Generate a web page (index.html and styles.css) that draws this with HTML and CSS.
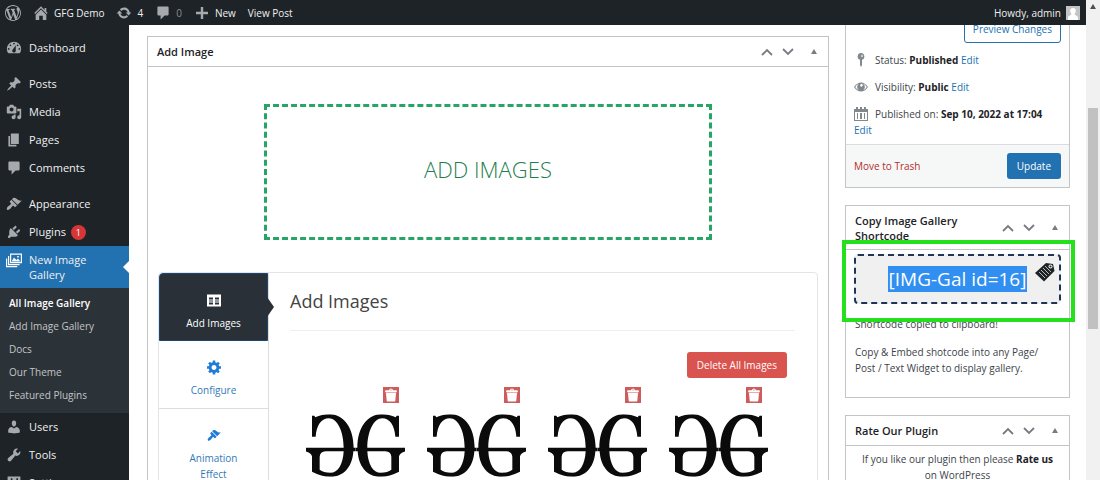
FILE: index.html
```html
<!DOCTYPE html>
<html lang="en">
<head>
<meta charset="utf-8">
<title>Edit Gallery</title>
<link rel="stylesheet" href="styles.css">
</head>
<body>
<svg class="defs" aria-hidden="true">
  <symbol id="comment" viewBox="0 0 20 20"><path d="M4 2h12c.6 0 1 .4 1 1v9c0 .6-.4 1-1 1h-4l-5 5v-5H4c-.6 0-1-.4-1-1V3c0-.6.4-1 1-1z"/></symbol>
  <symbol id="brush" viewBox="0 0 20 20"><path d="M14.48 11.06L7.41 3.99l1.5-1.5c.5-.56 2.3-.47 3.51.32 1.21.8 1.43 1.28 2.91 2.1 1.18.64 2.45 1.26 4.45.85zm-.71.71L6.7 4.7 4.93 6.47c-.39.39-.39 1.02 0 1.41l1.06 1.06c.39.39.39 1.03 0 1.42-.6.6-1.43 1.11-2.21 1.69-.35.26-.7.53-1.01.84C1.43 14.23.4 16.08 1.4 17.07c.99 1 2.84-.03 4.18-1.36.31-.31.58-.66.85-1.02.57-.78 1.08-1.61 1.69-2.21.39-.39 1.02-.39 1.41 0l1.06 1.06c.39.39 1.02.39 1.41 0z"/></symbol>
  <symbol id="trash" viewBox="1 1 18 18"><path d="M12.5 4h4c.6 0 1 .4 1 1v1.5h-15V5c0-.6.4-1 1-1h4c.2-1.300 1.300-2.200 2.500-2.200s2.300.9 2.500 2.200zM8.500 4h3c-.2-.6-.9-1-1.500-1s-1.300.4-1.500 1zM3.500 7h13l-1 10.500c0 .6-.5 1-1 1H5.500c-.5 0-1-.4-1-1z"/></symbol>
  <symbol id="up" viewBox="0 0 12 8"><path d="M1 7l5-5 5 5" fill="none" stroke="currentColor" stroke-width="1.800"/></symbol>
  <symbol id="down" viewBox="0 0 12 8"><path d="M1 1l5 5 5-5" fill="none" stroke="currentColor" stroke-width="1.800"/></symbol>
  <symbol id="toggle" viewBox="0 0 6 5"><path d="M0 5l3-5 3 5z"/></symbol>
  <symbol id="half" viewBox="148 0 149 188"><path fill-rule="evenodd" d="M279 5V68H268C266 32 250 12 229 12C203 12 184 52 184 101H297V112Q283 116 279 126V173Q250 188 225 188C180 188 157 152 155 111H148V101H154C154 36 187 0 226 0Q250 0 269 9L272 5ZM184 111C186 150 201 176 224 176Q245 176 256 167V128Q255 112 238 111Z"/></symbol>
  <symbol id="logo" viewBox="0 0 297 188"><use href="#half" x="148" width="149" height="188"/><use href="#half" x="148" width="149" height="188" transform="matrix(-1 0 0 1 297 0)"/></symbol>
</svg>
<div class="window">
  <header class="adminbar">
    <a href="#" aria-label="About WordPress"><svg class="icon" viewBox="0 0 20 20"><path d="M20 10c0-5.510-4.490-10-10-10C4.480 0 0 4.490 0 10c0 5.520 4.480 10 10 10 5.510 0 10-4.480 10-10zM7.780 15.370L4.370 6.220c.55-.02 1.170-.08 1.170-.08.5-.06.44-1.130-.06-1.110 0 0-1.450.11-2.370.11-.18 0-.37 0-.58-.01C4.120 2.690 6.870 1.110 10 1.110c2.330 0 4.450.87 6.050 2.340-.68-.11-1.650.39-1.650 1.580 0 .74.45 1.360.9 2.100.35.610.55 1.360.55 2.460 0 1.490-1.400 5-1.400 5l-3.030-8.370c.54-.02.82-.17.82-.17.5-.05.44-1.250-.06-1.220 0 0-1.440.12-2.380.12-.87 0-2.330-.12-2.330-.12-.5-.03-.56 1.200-.06 1.220l.92.08 1.260 3.410zM17.410 10c.24-.64.74-1.870.43-4.250.7 1.290 1.050 2.710 1.050 4.250 0 3.290-1.730 6.240-4.400 7.780.97-2.590 1.940-5.200 2.920-7.780zM6.100 18.090C3.120 16.650 1.110 13.530 1.110 10c0-1.300.23-2.480.72-3.590C3.250 10.300 4.670 14.200 6.100 18.090zm4.030-6.630l2.580 6.980c-.86.29-1.760.45-2.710.45-.79 0-1.570-.11-2.290-.33.81-2.380 1.620-4.740 2.420-7.100z"/></svg></a>
    <a href="#"><svg class="icon" viewBox="1 1 18 18"><path d="M16 8.500l1.530 1.530-1.060 1.060L10 4.600l-6.470 6.490-1.060-1.060L10 2.500l4 4v-2h2v4zm-6-2.460l6 5.990V18h-4v-5H8v5H4v-5.970z"/></svg>GFG Demo</a>
    <a href="#"><svg class="icon" viewBox="0 0 20 20"><path d="M10.200 3.280c3.530 0 6.430 2.610 6.920 6h2.080l-3.500 4-3.500-4h2.320c-.45-1.970-2.210-3.450-4.320-3.450-1.450 0-2.730.71-3.540 1.780L4.950 5.660C6.230 4.200 8.110 3.280 10.200 3.280zm-.4 13.440c-3.520 0-6.430-2.610-6.920-6H.8l3.500-4 3.500 4H5.480c.45 1.970 2.210 3.450 4.320 3.450 1.450 0 2.730-.71 3.540-1.780l1.710 1.950c-1.280 1.460-3.150 2.380-5.250 2.380z"/></svg>4</a>
    <a href="#" class="dim"><svg class="icon"><use href="#comment"/></svg>0</a>
    <a href="#"><svg class="icon" viewBox="0 0 20 20"><path d="M17.500 8.500v3h-6v6h-3v-6h-6v-3h6v-6h3v6z"/></svg>New</a>
    <a href="#">View Post</a>
    <a href="#" class="account">Howdy, admin<svg class="avatar" viewBox="0 0 14 14"><path fill="#c3c4c7" d="M0 0h14v14H0z"/><path fill="#fff" d="M7 2c4 0 3 5 1.500 6C9 9.500 12 9.500 12 12v2H2v-2c0-2.500 3-2.500 3.500-4C4 7 3 2 7 2z"/></svg></a>
  </header>
  <div class="workspace">
    <nav class="sidebar">
      <a href="#"><svg class="icon" viewBox="1 1 18 18"><path fill-rule="evenodd" d="M3.760 16h12.480c1.100-1.370 1.760-3.110 1.760-5 0-4.420-3.580-8-8-8s-8 3.580-8 8c0 1.890.66 3.630 1.760 5zM10 4c.55 0 1 .45 1 1s-.45 1-1 1-1-.45-1-1 .45-1 1-1zM6 6c.55 0 1 .45 1 1s-.45 1-1 1-1-.45-1-1 .45-1 1-1zm8 0c.55 0 1 .45 1 1s-.45 1-1 1-1-.45-1-1 .45-1 1-1zm-5.370 5.550L12 7v6c0 1.100-.9 2-2 2s-2-.9-2-2c0-.57.24-1.080.63-1.450zM4 10c.55 0 1 .45 1 1s-.45 1-1 1-1-.45-1-1 .45-1 1-1zm12 0c.55 0 1 .45 1 1s-.45 1-1 1-1-.45-1-1 .45-1 1-1z"/></svg>Dashboard</a>
      <a href="#" class="spaced"><svg class="icon" viewBox="0 0 20 20"><path d="M10.440 3.020l1.820-1.820 6.360 6.350-1.830 1.820c-1.050-.68-2.480-.57-3.410.36l-.75.75c-.92.93-1.040 2.350-.35 3.410l-1.830 1.820-2.410-2.410-2.800 2.790c-.42.42-3.380 2.710-3.800 2.290s1.860-3.390 2.280-3.810l2.790-2.790L4.100 9.360l1.830-1.820c1.050.69 2.480.57 3.400-.36l.75-.75c.93-.92 1.050-2.350.36-3.410z"/></svg>Posts</a>
      <a href="#"><svg class="icon" viewBox="0 0 20 20"><path fill-rule="evenodd" d="M13 11V4c0-.55-.45-1-1-1h-1.670L9 1H5L3.670 3H2c-.55 0-1 .45-1 1v7c0 .55.45 1 1 1h10c.55 0 1-.45 1-1zM7 4.500c1.380 0 2.500 1.120 2.500 2.500S8.380 9.500 7 9.500 4.500 8.380 4.500 7 5.620 4.500 7 4.500zM14 6h5v10.500c0 1.380-1.120 2.500-2.500 2.500S14 17.880 14 16.500s1.120-2.500 2.500-2.500c.17 0 .34.02.5.05V9h-3V6zm-4 8.050V13h2v3.500c0 1.380-1.120 2.500-2.500 2.500S7 17.880 7 16.500 8.120 14 9.500 14c.17 0 .34.02.5.05z"/></svg>Media</a>
      <a href="#"><svg class="icon" viewBox="0 0 20 20"><path d="M6 15V2h10v13H6zm-1 1h8v2H3V5h2v11z"/></svg>Pages</a>
      <a href="#"><svg class="icon"><use href="#comment"/></svg>Comments</a>
      <a href="#" class="spaced"><svg class="icon"><use href="#brush"/></svg>Appearance</a>
      <a href="#"><svg class="icon" viewBox="0 0 20 20"><path d="M13.110 4.360L9.870 7.600 8 5.730l3.240-3.240c.35-.34 1.050-.2 1.560.32.52.51.66 1.210.31 1.550zm-8 1.770l.91-1.120 9.010 9.010-1.190.84c-.71.71-2.630 1.160-3.820 1.160H6.140L4.900 17.260c-.59.59-1.540.59-2.120 0-.59-.58-.59-1.530 0-2.120l1.240-1.240v-3.880c0-1.130.4-3.190 1.090-3.890zm7.260 3.970l3.240-3.240c.34-.35 1.040-.21 1.550.31.52.51.66 1.210.31 1.550l-3.240 3.250z"/></svg>Plugins<span class="count">1</span></a>
      <a href="#" class="current"><svg class="icon" viewBox="0 0 20 20"><path fill-rule="evenodd" d="M5 2h15v12H5zM6.500 3.500v9h12v-9zM7 12l3-5 3 3 2-2 3 4zM14 5h2v2h-2zM2.500 5H4v10h13v1.500H2.500zM0 8h1.500v9.500H14V19H0z"/></svg><span>New Image Gallery</span></a>
      <div class="submenu">
        <a href="#" class="chosen">All Image Gallery</a>
        <a href="#">Add Image Gallery</a>
        <a href="#">Docs</a>
        <a href="#">Our Theme</a>
        <a href="#">Featured Plugins</a>
      </div>
      <a href="#"><svg class="icon" viewBox="0 0 20 20"><path d="M10 9.250c-2.270 0-2.730-3.440-2.730-3.440C7 4.020 7.820 2 9.970 2c2.160 0 2.980 2.020 2.710 3.810 0 0-.41 3.440-2.680 3.440zm0 2.570L12.720 10c2.390 0 4.520 2.330 4.520 4.530v2.490s-3.650 1.130-7.240 1.130c-3.650 0-7.240-1.130-7.240-1.130v-2.490c0-2.250 1.940-4.480 4.470-4.480z"/></svg>Users</a>
      <a href="#"><svg class="icon" viewBox="0 0 20 20"><path d="M16.680 9.770c-1.340 1.340-3.300 1.670-4.950.99l-5.410 6.520c-.99.99-2.590.99-3.580 0s-.99-2.590 0-3.570l6.520-5.420c-.68-1.650-.35-3.610.99-4.950 1.280-1.280 3.120-1.620 4.720-1.060l-2.890 2.890 2.820 2.820 2.860-2.870c.53 1.580.18 3.390-1.080 4.650z"/></svg>Tools</a>
      <a href="#"><svg class="icon" viewBox="0 0 20 20"><path fill-rule="evenodd" d="M2 2h16v16H2zM6 4v5H4v3h2v4h2v-4h2V9H8V4zM13 4v3h-2v3h2v6h2v-6h2V7h-2V4z"/></svg>Settings</a>
    </nav>
    <main class="content">
      <section class="box editor">
        <div class="box-head"><h2>Add Image</h2>
          <div class="handles"><button aria-label="Move up"><svg class="chevron"><use href="#up"/></svg></button><button aria-label="Move down"><svg class="chevron"><use href="#down"/></svg></button><button class="fold" aria-label="Toggle panel"><svg class="triangle"><use href="#toggle"/></svg></button></div>
        </div>
        <button class="dropzone">ADD IMAGES</button>
        <div class="tabs">
          <nav class="tablist">
            <a href="#" class="tab active"><svg class="icon" viewBox="0 0 14 12"><path fill-rule="evenodd" d="M0 0h14v12H0zM2 3v2h4V3zM8 3v2h4V3zM2 6v1h4V6zM8 6v1h4V6zM2 8v2h4V8zM8 8v2h4V8z"/></svg>Add Images</a>
            <a href="#" class="tab"><svg class="icon" viewBox="1 2 17 17"><path fill-rule="evenodd" d="M18 12h-2.180c-.17.7-.44 1.350-.81 1.930l1.540 1.540-2.100 2.100-1.540-1.540c-.58.36-1.230.63-1.910.79V19H8v-2.180c-.68-.16-1.330-.43-1.910-.79l-1.540 1.540-2.120-2.120 1.540-1.540c-.36-.58-.63-1.230-.79-1.910H1V9.030h2.170c.16-.7.44-1.350.8-1.940L2.430 5.550l2.100-2.100 1.540 1.540c.58-.37 1.240-.64 1.930-.81V2h3v2.180c.68.160 1.330.430 1.910.790l1.540-1.540 2.120 2.120-1.540 1.540c.36.590.64 1.240.8 1.940H18V12zm-8.500 1.500c1.660 0 3-1.340 3-3s-1.340-3-3-3-3 1.340-3 3 1.340 3 3 3z"/></svg>Configure</a>
            <a href="#" class="tab"><svg class="icon"><use href="#brush"/></svg><span>Animation<br>Effect</span></a>
          </nav>
          <div class="panel">
            <h3>Add Images</h3>
            <button class="danger">Delete All Images</button>
            <div class="gallery">
              <figure><button aria-label="Delete image"><svg><use href="#trash"/></svg></button><svg class="picture"><use href="#logo"/></svg></figure>
              <figure><button aria-label="Delete image"><svg><use href="#trash"/></svg></button><svg class="picture"><use href="#logo"/></svg></figure>
              <figure><button aria-label="Delete image"><svg><use href="#trash"/></svg></button><svg class="picture"><use href="#logo"/></svg></figure>
              <figure><button aria-label="Delete image"><svg><use href="#trash"/></svg></button><svg class="picture"><use href="#logo"/></svg></figure>
            </div>
          </div>
        </div>
      </section>
      <aside class="side">
        <section class="box publish">
          <div class="publish-body">
            <button class="preview">Preview Changes</button>
            <p><svg class="mark" viewBox="0 0 14 14"><path d="M7 0a3.500 3.500 0 0 1 1 6.800V12l-1 2-1-2V6.800A3.500 3.500 0 0 1 7 0z"/><circle cx="8" cy="3" r="1.200" fill="#ccc"/></svg>Status: <b>Published</b> <a href="#">Edit</a></p>
            <p><svg class="mark" viewBox="0 0 14 14"><path fill-rule="evenodd" d="M0 7C4 1 10 1 14 7 10 13 4 13 0 7zM1.300 7c1 1.700 2.200 2.700 3.500 3.200a3.900 3.900 0 0 1 0-6.400C3.500 4.300 2.300 5.300 1.300 7zM12.700 7c-1-1.700-2.200-2.700-3.500-3.200a3.900 3.900 0 0 1 0 6.400c1.300-.5 2.500-1.500 3.500-3.200zM7 4a1.300 1.300 0 1 0 1 2.500A1.300 1.300 0 0 0 7 4z"/></svg>Visibility: <b>Public</b> <a href="#">Edit</a></p>
            <p><svg class="mark" viewBox="0 0 14 14"><path fill-rule="evenodd" d="M0 2h2V0h2v2h2V0h2v2h2V0h2v2h2v12H0zM1 5v8h12V5zM3 6h1v6H3zM6 6h2v6H6zM10 6h1v6h-1z"/></svg>Published on: <b>Sep 10, 2022 at 17:04</b><br><a href="#">Edit</a></p>
          </div>
          <div class="publish-foot"><a href="#" class="remove">Move to Trash</a><button class="primary">Update</button></div>
        </section>
        <section class="box shortcode">
          <div class="box-head"><h2>Copy Image Gallery Shortcode</h2>
            <div class="handles"><button aria-label="Move up"><svg class="chevron"><use href="#up"/></svg></button><button aria-label="Move down"><svg class="chevron"><use href="#down"/></svg></button><button class="fold" aria-label="Toggle panel"><svg class="triangle"><use href="#toggle"/></svg></button></div>
          </div>
          <div class="code"><input aria-label="Shortcode" readonly value="[IMG-Gal id=16]"><button class="copy" aria-label="Copy shortcode"><svg viewBox="0 0 20 20"><path fill="#1d2327" d="M0 11L11 1l7 1 1.500 7L9 19.500z"/><path fill="none" stroke="#ddd" stroke-width=".8" d="M4 10l6 6M6 8l6 6M8 6l6 6M10 4l6 6"/><circle cx="15.500" cy="4.500" r="2" fill="#eee"/><circle cx="15.500" cy="4.500" r="1" fill="#1d2327"/></svg></button></div>
          <p class="copied">Shortcode copied to clipboard!</p>
          <p class="hint">Copy &amp; Embed shotcode into any Page/<br>Post / Text Widget to display gallery.</p>
          <div class="callout"></div>
        </section>
        <section class="box">
          <div class="box-head"><h2>Rate Our Plugin</h2>
            <div class="handles"><button aria-label="Move up"><svg class="chevron"><use href="#up"/></svg></button><button aria-label="Move down"><svg class="chevron"><use href="#down"/></svg></button><button class="fold" aria-label="Toggle panel"><svg class="triangle"><use href="#toggle"/></svg></button></div>
          </div>
          <p class="rate">If you like our plugin then please <b>Rate us</b><br>on WordPress</p>
        </section>
      </aside>
    </main>
  </div>
</div>
<div class="scrollbar" aria-hidden="true"><svg class="triangle"><use href="#toggle"/></svg><div class="thumb"></div></div>
</body>
</html>
```
FILE: styles.css
```css
* { box-sizing: border-box; }
body {
  margin: 0;
  height: 100vh;
  display: flex;
  overflow: hidden;
  background: #fff;
  color: #3c434a;
  font: 10px/16px "Open Sans", "Noto Sans", sans-serif;
}
svg { fill: currentColor; flex: none; }
a { color: #2271b1; text-decoration: none; }
button, input { font: inherit; color: inherit; }
button { padding: 0; border: 0; background: none; }
h2, h3, p, figure { margin: 0; }
.defs { position: absolute; width: 0; height: 0; }
.icon { width: 16px; height: 16px; }

.window { flex: 1; min-width: 0; display: flex; flex-direction: column; }
.adminbar {
  flex: none;
  height: 25px;
  display: flex;
  align-items: center;
  gap: 12px;
  padding: 0 6px 0 5px;
  background: #1d2327;
}
.adminbar a { display: flex; align-items: center; gap: 5px; color: #f0f0f1; }
.adminbar .icon { color: #a7aaad; }
.adminbar .dim { color: #8c8f94; }
.adminbar .account { margin-left: auto; }
.avatar { width: 14px; height: 14px; }

.workspace { flex: 1; min-height: 0; display: flex; overflow: hidden; }
.sidebar { flex: none; width: 129px; padding-top: 9px; background: #1d2327; font-size: 11px; }
.sidebar > a {
  min-height: 28px;
  display: flex;
  align-items: center;
  gap: 7px;
  padding: 0 6px;
  color: #f0f0f1;
}
.sidebar .icon { color: #a7aaad; }
.sidebar > .spaced { margin-top: 8px; }
.count {
  width: 15px;
  height: 15px;
  margin-left: -2px;
  border-radius: 50%;
  background: #d63638;
  color: #fff;
  font-size: 9px;
  line-height: 15px;
  text-align: center;
}
.sidebar > .current {
  position: relative;
  align-items: flex-start;
  padding: 6px 30px 6px 6px;
  background: #2271b1;
  line-height: 15px;
}
.sidebar .current .icon { color: #fff; }
.current::after {
  content: "";
  position: absolute;
  right: 0;
  top: 15px;
  border: 6px solid transparent;
  border-right-color: #fff;
  border-left: 0;
}
.submenu { padding: 4px 9px 6px; background: #2c3338; font-size: 10px; }
.submenu a { display: block; color: #c3c4c7; line-height: 23px; }
.submenu .chosen { color: #fff; font-weight: 600; }

.content { flex: 1; min-width: 0; display: flex; align-items: flex-start; gap: 16px; padding: 0 16px 0 18px; }
.box { border: 1px solid #c3c4c7; background: #fff; }
.box-head {
  min-height: 30px;
  display: flex;
  align-items: center;
  justify-content: space-between;
  padding: 0 11px 0 9px;
  border-bottom: 1px solid #c3c4c7;
}
h2 { font-size: 11px; line-height: 15px; font-weight: 600; color: #1d2327; }
.handles { display: flex; align-items: center; gap: 9px; color: #787c82; }
.handles button { display: flex; }
.handles .fold { margin-left: 8px; }
.chevron { width: 12px; height: 8px; }
.triangle { width: 6px; height: 5px; }

.editor { flex: 1; min-width: 0; margin-top: 11px; }
.dropzone {
  display: block;
  width: 66%;
  height: 136px;
  margin: 37px auto 32px;
  padding-bottom: 6px;
  border: 3px dashed #27a567;
  color: #1f7d4f;
  font-size: 22px;
  font-weight: 300;
}
.tabs { display: flex; margin: 0 10px; border: 1px solid #e2e4e7; border-radius: 4px 4px 0 0; }
.tablist { flex: none; width: 110px; border-right: 1px solid #ddd; }
.tab {
  position: relative;
  min-height: 68px;
  display: flex;
  flex-direction: column;
  align-items: center;
  gap: 7px;
  padding: 19px 4px 8px;
  border-bottom: 1px solid #ddd;
  color: #337ab7;
  text-align: center;
}
.tab .icon { width: 14px; height: 15px; color: #1e7bd8; }
.tab.active { border: 1px solid #1d4773; border-radius: 4px 0 0 0; background: #2a3038; color: #fff; }
.tab.active .icon { color: #fff; }
.tab.active::after {
  content: "";
  position: absolute;
  left: 100%;
  top: 23px;
  border: 10px solid transparent;
  border-left: 7px solid #2a3038;
  border-right: 0;
}
.panel { flex: 1; min-width: 0; display: flex; flex-direction: column; padding: 16px 22px 0 21px; }
h3 { padding-bottom: 16px; border-bottom: 1px solid #eee; font-size: 18px; line-height: 25px; font-weight: 400; color: #444; }
.danger { align-self: flex-end; height: 26px; margin: 21px 8px 9px; padding: 0 10px; border-radius: 3px; background: #d9534f; color: #fff; }
.gallery { display: flex; gap: 22px; padding-left: 16px; }
figure { width: 99px; display: flex; flex-direction: column; align-items: flex-end; gap: 11px; }
figure button { width: 16px; height: 16px; margin-right: 6px; background: #cd5c5c; color: #fff; }
figure button svg { display: block; width: 14px; height: 14px; margin: auto; }
.picture { width: 99px; height: 63px; color: #0b0b0b; }

.side { flex: none; width: 225px; display: flex; flex-direction: column; gap: 17px; margin-top: -20px; }
.publish-body { display: flex; flex-direction: column; gap: 11px; padding: 9px 8px 6px; }
.preview { align-self: flex-end; height: 28px; margin-bottom: -2px; padding: 0 8px; border: 1px solid #2271b1; border-radius: 3px; color: #2271b1; }
.publish-body b { color: #1d2327; }
.mark { width: 14px; height: 14px; margin-right: 7px; vertical-align: -3px; color: #82878c; }
.publish-foot {
  display: flex;
  align-items: center;
  justify-content: space-between;
  padding: 8px;
  border-top: 1px solid #dcdcde;
  background: #f6f7f7;
}
.remove { color: #b32d2e; }
.primary { height: 26px; padding: 0 10px; border-radius: 3px; background: #2271b1; color: #fff; }
.shortcode { position: relative; height: 193px; }
.shortcode .box-head { min-height: 44px; }
.shortcode h2 { width: 110px; }
.code {
  position: relative;
  height: 50px;
  display: flex;
  align-items: center;
  justify-content: center;
  margin: 4px 8px 12px;
  border: 2px dashed #1d3557;
  border-radius: 4px;
  background: #f0f0f1;
}
.code input { width: 139px; height: 26px; padding: 0; border: 0; background: #308ff0; color: #fff; font-size: 19px; text-align: center; }
.copy { position: absolute; top: 6px; right: 4px; width: 20px; height: 20px; }
.copied, .hint { padding: 0 9px; }
.hint { margin-top: 12px; }
.callout { position: absolute; top: 34px; left: -4px; right: -6px; height: 82px; border: 4px solid #25e01c; }
.rate { padding: 5px 4px; text-align: center; }
.rate b { color: #1d2327; }

.scrollbar { flex: none; width: 14px; display: flex; flex-direction: column; align-items: center; padding-top: 4px; background: #f1f1f1; color: #505050; }
.thumb { width: 10px; height: 46vh; margin-top: 99px; background: #c1c1c1; }
```
